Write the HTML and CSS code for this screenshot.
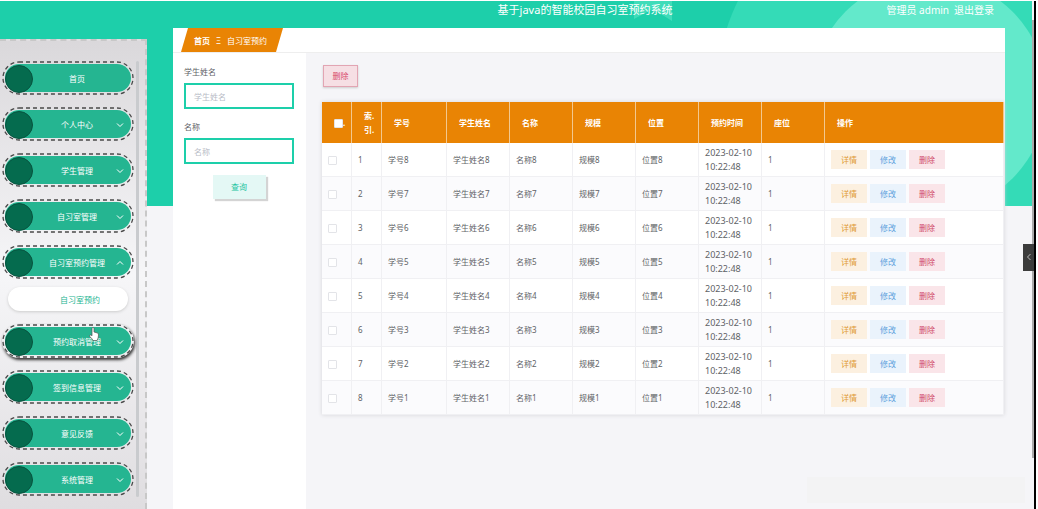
FILE: index.html
```
<!DOCTYPE html>
<html lang="zh-CN">
  <head>
    <meta charset="UTF-8" />
    <meta name="viewport" content="width=device-width, initial-scale=1.0" />
    <title>基于java的智能校园自习室预约系统</title>
    <link rel="stylesheet" href="styles.css">
  </head>
  <body>
    <div class="page">
      <!-- green banner behind the content -->
      <div class="banner">
        <svg class="circles" width="300" height="205" viewBox="0 0 300 205">
          <circle cx="197" cy="94" r="213" fill="#34dbb7" />
          <circle cx="197" cy="94" r="118" fill="#63e9cb" />
        </svg>
        <svg class="ribbon" width="38" height="20" viewBox="0 0 38 20">
          <path d="M0 0H38V20L19 8L0 18Z" fill="#3fdcb9" />
        </svg>
      </div>

      <!-- TOP BAR -->
      <header class="topbar">
        <h1>基于java的智能校园自习室预约系统</h1>
        <div class="user">
          <span>管理员 admin</span>
          <a href="#">退出登录</a>
        </div>
      </header>

      <div class="layout">
        <!-- SIDEBAR -->
        <nav class="sidebar">
          <ul class="menu">
            <li><button class="menu-item">首页</button></li>
            <li><button class="menu-item">个人中心<svg class="arrow" viewBox="0 0 8 8"><path d="M1 2.5L4 5.5L7 2.5" /></svg></button></li>
            <li><button class="menu-item">学生管理<svg class="arrow" viewBox="0 0 8 8"><path d="M1 2.5L4 5.5L7 2.5" /></svg></button></li>
            <li><button class="menu-item">自习室管理<svg class="arrow" viewBox="0 0 8 8"><path d="M1 2.5L4 5.5L7 2.5" /></svg></button></li>
            <li>
              <button class="menu-item">自习室预约管理<svg class="arrow" viewBox="0 0 8 8"><path d="M1 5.5L4 2.5L7 5.5" /></svg></button>
              <a class="submenu" href="#">自习室预约</a>
            </li>
            <li class="hovered">
              <button class="menu-item">预约取消管理<svg class="arrow" viewBox="0 0 8 8"><path d="M1 2.5L4 5.5L7 2.5" /></svg></button>
              <svg class="pointer" viewBox="0 0 10 14"><path d="M3 8V1.5Q3 .5 4 .5T5 1.5V5L8.500 6Q9.500 6.500 9.500 8Q9.500 11 8 13.500H4Q3 11.500 .8 9.500Q.2 8.500 1.200 8Q2 7.600 3 8.800Z" fill="#fff" stroke="#555" stroke-width=".7" /></svg>
            </li>
            <li><button class="menu-item">签到信息管理<svg class="arrow" viewBox="0 0 8 8"><path d="M1 2.5L4 5.5L7 2.5" /></svg></button></li>
            <li><button class="menu-item">意见反馈<svg class="arrow" viewBox="0 0 8 8"><path d="M1 2.5L4 5.5L7 2.5" /></svg></button></li>
            <li><button class="menu-item">系统管理<svg class="arrow" viewBox="0 0 8 8"><path d="M1 2.5L4 5.5L7 2.5" /></svg></button></li>
          </ul>
          <div class="menu-scroll"></div>
        </nav>

        <!-- MAIN CONTENT -->
        <main class="main">
          <div class="breadcrumb">
            <div class="crumbs"><b>首页</b><span class="sep">Ξ</span><span>自习室预约</span></div>
          </div>

          <div class="content">
            <form class="search">
              <label for="student">学生姓名</label>
              <input type="text" id="student" placeholder="学生姓名" />
              <label for="room">名称</label>
              <input type="text" id="room" placeholder="名称" />
              <button type="button" class="query">查询</button>
            </form>

            <section class="list">
              <button class="delete-all">删除</button>
              <table>
                <colgroup>
                  <col class="c-check" /><col class="c-check" /><col class="c-number" /><col class="c-mid" /><col class="c-mid" />
                  <col class="c-mid" /><col class="c-mid" /><col class="c-mid" /><col class="c-mid" /><col />
                </colgroup>
                <thead>
                  <tr>
                    <th><input type="checkbox" aria-label="全选" />.</th>
                    <th>索.<br />引.</th>
                    <th>学号</th>
                    <th>学生姓名</th>
                    <th>名称</th>
                    <th>规模</th>
                    <th>位置</th>
                    <th>预约时间</th>
                    <th>座位</th>
                    <th>操作</th>
                  </tr>
                </thead>
                <tbody id="rows"></tbody>
              </table>
            </section>
          </div>
        </main>
      </div>

      <div class="toast"></div>
      <div class="page-scroll"></div>
      <button class="drawer" aria-label="展开"><svg viewBox="0 0 8 8"><path d="M5.500 1L2.500 4L5.500 7" /></svg></button>
    </div>

    <script>
      // dashed ring around every menu pill
      document.querySelectorAll(".menu-item").forEach((item) => {
        item.insertAdjacentHTML("beforeend", '<svg class="ring"><rect /></svg>');
      });

      // one row for each booking, newest first
      const rows = document.getElementById("rows");
      for (let i = 1; i <= 8; i++) {
        const n = 9 - i;
        rows.innerHTML += `<tr>
          <td><input type="checkbox" aria-label="选择${i}" /></td>
          <td>${i}</td>
          <td>学号${n}</td>
          <td>学生姓名${n}</td>
          <td>名称${n}</td>
          <td>规模${n}</td>
          <td>位置${n}</td>
          <td class="date">2023-02-10 10:22:48</td>
          <td>1</td>
          <td><div class="actions">
            <button class="detail">详情</button>
            <button class="edit">修改</button>
            <button class="remove">删除</button>
          </div></td>
        </tr>`;
      }
    </script>
  </body>
</html>
```

FILE: styles.css
```
* {
  box-sizing: border-box;
  margin: 0;
  padding: 0;
}

body {
  background-color: #fff;
  color: #606266;
  font-family: "Noto Sans", "Noto Sans CJK SC", sans-serif;
  font-size: 8px;
  line-height: 14px;
}

button,
input {
  font: inherit;
}

button {
  border: none;
  cursor: pointer;
}

a {
  color: inherit;
  text-decoration: none;
}

.page {
  position: relative;
  display: flex;
  flex-direction: column;
  min-height: calc(100vh - 1px);
  margin: 1px 2px 0 0;
  border-right: 2px solid #000;
  background-color: #f5f5f8;
  overflow: hidden;
}

/* BANNER */
.banner {
  position: absolute;
  top: 0;
  left: 0;
  right: 2px;
  height: 205px;
  background-color: #1dcfaa;
  display: flex;
  justify-content: flex-end;
  overflow: hidden;
}

.circles {
  overflow: visible;
}

.ribbon {
  position: absolute;
  top: 0;
  right: 360px;
}

/* TOP BAR */
.topbar {
  position: relative;
  display: grid;
  grid-template-columns: 1fr auto 1fr;
  height: 27px;
  margin: 0 0 0 136px;
  color: #fff;
  font-size: 10px;
  line-height: 18px;
}

.topbar h1 {
  grid-column: 2;
  font-size: 11px;
  font-weight: 400;
}

.user {
  display: flex;
  justify-content: flex-end;
  gap: 5px;
  padding-right: 40px;
}

/* LAYOUT */
.layout {
  position: relative;
  flex: 1;
  display: flex;
  gap: 26px;
  padding-right: 29px;
}

.sidebar {
  display: flex;
  width: 147px;
  margin-top: 11px;
  padding: 20px 6px 12px 2px;
  border-top: 2px dashed #c8c8c8;
  border-right: 2px dashed #c8c8c8;
  background: linear-gradient(#dad8db, #f6f6f8 50%, #dfdde0);
  gap: 2px;
}

.menu {
  flex: 1;
  list-style: none;
}

.menu li {
  position: relative;
  margin-bottom: 12px;
}

.menu li:last-child {
  margin-bottom: 0;
}

.menu-item {
  position: relative;
  display: block;
  width: 100%;
  height: 34px;
  padding: 2px 0 0 18px;
  border-radius: 17px;
  background-color: transparent;
  color: #fff;
  text-align: center;
  z-index: 0;
}

.menu-item::after {
  content: "";
  position: absolute;
  inset: 3px;
  border-radius: 14px;
  background-color: #25b591;
  box-shadow: 0 0 1px #e3fff7;
  z-index: -1;
}

.menu-item::before {
  content: "";
  position: absolute;
  top: 4px;
  left: 3px;
  width: 26px;
  height: 26px;
  border: 1px solid #08533f;
  border-radius: 50%;
  background-color: #056b4e;
}

.ring {
  position: absolute;
  top: 0;
  left: 0;
  width: 100%;
  height: 100%;
}

.ring rect {
  x: 1px;
  y: 1px;
  width: calc(100% - 2px);
  height: calc(100% - 2px);
  rx: 16px;
  fill: none;
  stroke: #4a4a4a;
  stroke-width: 1.3;
  stroke-dasharray: 4 3;
}

.hovered .menu-item {
  box-shadow: 1px 2px 3px #333;
}

.arrow {
  position: absolute;
  top: 14px;
  right: 10px;
  width: 8px;
  height: 8px;
  fill: none;
  stroke: #fff;
}

.submenu {
  display: block;
  height: 24px;
  margin: 8px 6px 13px;
  padding: 1px 0 0 24px;
  border-radius: 12px;
  background-color: #fff;
  box-shadow: 0 1px 3px #ccc;
  color: #25b591;
  line-height: 24px;
  text-align: center;
}

.pointer {
  position: absolute;
  top: 3px;
  left: 87px;
  width: 10px;
  height: 14px;
  z-index: 1;
}

.menu-scroll {
  width: 3px;
  border-radius: 2px;
  background-color: #c9cbce;
}

/* MAIN */
.main {
  flex: 1;
  display: flex;
  flex-direction: column;
  background-color: #f5f5f8;
}

.breadcrumb {
  height: 25px;
  padding-left: 8px;
  border-bottom: 1px solid #eee;
  background-color: #fff;
}

.crumbs {
  display: flex;
  align-items: center;
  gap: 6px;
  width: 102px;
  height: 24px;
  padding: 2px 0 0 13px;
  background-color: #e98404;
  clip-path: polygon(7px 0, 100% 0, 95px 100%, 0 100%);
  color: #fff;
  white-space: nowrap;
}

.content {
  flex: 1;
  display: flex;
}

.search {
  display: flex;
  flex-direction: column;
  width: 133px;
  padding: 12px 12px 0 11px;
  background-color: #fff;
}

.search input {
  width: 100%;
  height: 26px;
  margin: 4px 0 11px;
  padding-left: 8px;
  border: 2px solid #1dcfaa;
  outline: none;
}

.search input::placeholder {
  color: #b8bcc6;
}

.query {
  align-self: center;
  width: 53px;
  height: 24px;
  background-color: #e4f8f5;
  box-shadow: 2px 2px 1px #d4d4d4;
  color: #1dc4a2;
}

.list {
  flex: 1;
  padding: 12px 1px 0 16px;
}

.delete-all {
  display: block;
  width: 35px;
  height: 22px;
  margin: 0 0 15px 1px;
  border: 1px solid #e2a5b3;
  background-color: #f6dfe4;
  box-shadow: 0 1px 2px #ccc;
  color: #d8496b;
}

/* TABLE */
table {
  width: 100%;
  border-spacing: 0;
  table-layout: fixed;
  background-color: #fff;
  box-shadow: 0 0 4px #d5d5da;
}

.c-check {
  width: 30px;
}

.c-number {
  width: 65px;
}

.c-mid {
  width: 63px;
}

th,
td {
  border-right: 1px solid #f0f0f3;
  text-align: left;
}

th {
  height: 41px;
  padding-left: 12px;
  border-right-color: #f3c88f;
  background-color: #e98404;
  color: #fff;
}

td {
  height: 34px;
  padding: 0 6px;
  border-bottom: 1px solid #f0f0f3;
}

tbody tr:nth-child(even) {
  background-color: #fbfbfd;
}

.date {
  padding-right: 0;
  font-size: 9px;
}

td input,
th input {
  appearance: none;
  display: inline-block;
  width: 9px;
  height: 9px;
  border: 1px solid #e3e4e8;
  border-radius: 1px;
  background-color: #fff;
  vertical-align: middle;
}

.actions {
  display: flex;
  gap: 3px;
}

.actions button {
  width: 36px;
  height: 19px;
}

.detail {
  background-color: #fcf0e0;
  color: #e09a35;
}

.edit {
  background-color: #eaf3fc;
  color: #5ea2dd;
}

.remove {
  background-color: #fae5e9;
  color: #d04a68;
}

/* OVERLAYS */
.toast {
  position: absolute;
  right: 9px;
  bottom: 6px;
  width: 218px;
  height: 26px;
  background-color: #f3f3f4;
}

.page-scroll {
  position: absolute;
  top: 19px;
  right: 0;
  bottom: 51px;
  width: 2px;
  background-color: #aaa;
}

.drawer {
  position: absolute;
  top: 243px;
  right: 0;
  width: 11px;
  height: 27px;
  background-color: #3c3c3c;
}

.drawer svg {
  width: 8px;
  height: 8px;
  fill: none;
  stroke: #bbb;
}
```
